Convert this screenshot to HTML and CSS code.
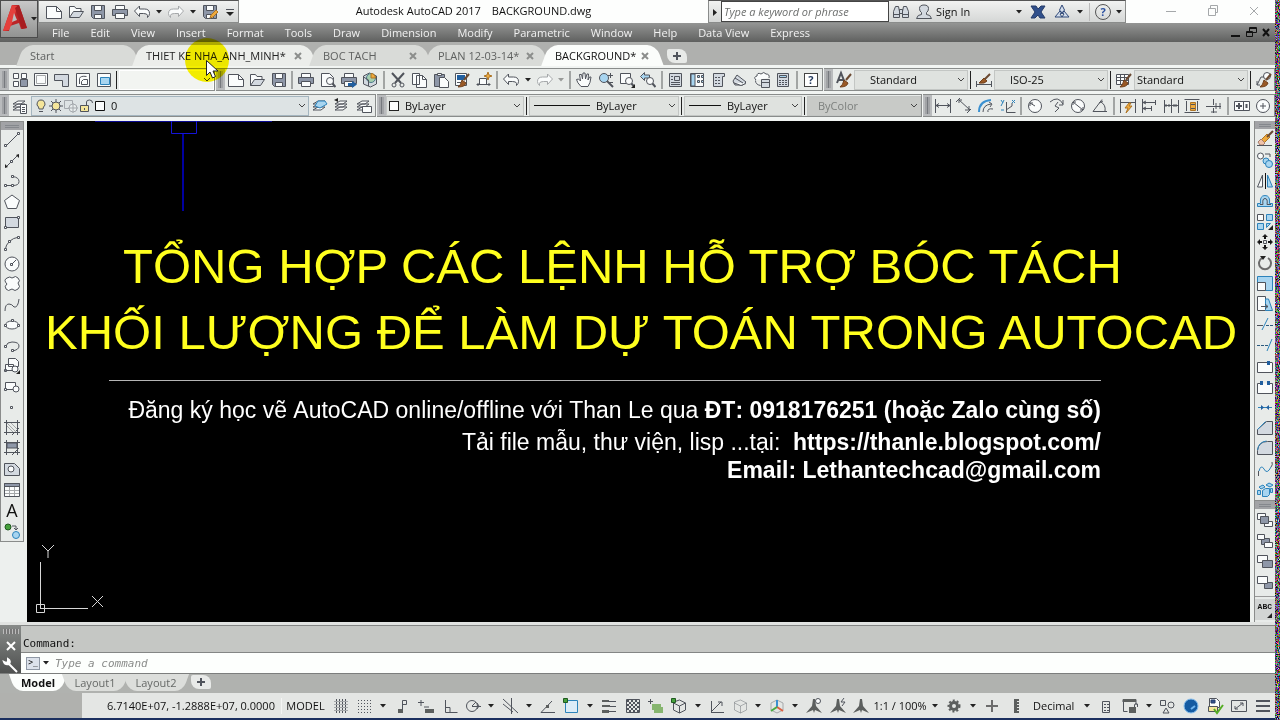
FILE: index.html
```html
<!DOCTYPE html>
<html lang="en">
<head>
<meta charset="utf-8">
<title>Autodesk AutoCAD 2017 BACKGROUND.dwg</title>
<link rel="stylesheet" href="styles.css">
</head>
<body>
<svg class="sprite" aria-hidden="true">
  <symbol id="new"><path class="w" d="M.5 2.500h10l5 5v7h-15z"/><path d="M10.500 2.500v5h5"/></symbol>
  <symbol id="open"><path class="w" d="M1.500 13.500v-11h5l1.500 2h5v3"/><path class="g" d="M1.500 13.500l4-6h10l-4 6z"/></symbol>
  <symbol id="save"><path class="s" d="M1.500 1.500h13v13h-11l-2-2z"/><path class="w" d="M4.500 1.500h7v5h-7zM4.500 10.500h7v4h-7z"/></symbol>
  <symbol id="print"><path class="w" d="M3.500 5.500v-4h9v4"/><path class="s" d="M.5 5.500h15v6h-15z"/><path class="w" d="M3.500 9.500h9v5h-9z"/></symbol>
  <symbol id="undo"><path class="w" d="M.5 7l5-5v3h5q5 0 5 4.500 0 2-2 4v-2q0-2-4-2h-4v3z"/></symbol>
  <symbol id="redo"><path class="w pale" d="M15.500 7l-5-5v3h-5q-5 0-5 4.500 0 2 2 4v-2q0-2 4-2h4v3z"/></symbol>
  <symbol id="tri"><path class="k" d="M0 0h6l-3 3.500z"/></symbol>
  <symbol id="brush"><path class="br" d="M8 8l4 3q-1 4-8 4 3-2 4-7z"/><path class="br2" d="M10 8l5-6"/></symbol>
  <symbol id="lens"><circle class="w" cx="10" cy="9" r="3.500"/><path class="th" d="M12.500 11.500l3 3.500"/></symbol>
  <symbol id="x"><path class="th" d="M1 1l6 6M7 1l-6 6"/></symbol>
  <symbol id="layers"><path class="w" d="M1 12l5-3h7l-4 3zM1 9l5-3h7l-4 3zM1 6l5-3h7l-4 3z"/></symbol>
</svg>
<div class="app">
<div class="window">
  <header class="header">
    <button class="logo" aria-label="Application menu"><svg class="logo-art" viewBox="0 0 28 30"><path class="red1" d="M1 27L10 1h7l8 23-6 1-2-6-9 3-1 5z"/><path class="red2" d="M10 1l5 1-3 13-5 11-6 1z"/><path class="red3" d="M17 1l8 23-5 1L13 4z"/><path class="hole" d="M12 9l3 7-5 2z"/></svg><svg class="dd"><use href="#tri"/></svg></button>
    <div class="titlebar">
      <div class="quick">
        <button class="ib" aria-label="New"><svg class="i"><use href="#new"/></svg></button>
        <button class="ib" aria-label="Open"><svg class="i"><use href="#open"/></svg></button>
        <button class="ib" aria-label="Save"><svg class="i"><use href="#save"/></svg></button>
        <button class="ib" aria-label="Plot"><svg class="i"><use href="#print"/></svg></button>
        <button class="ib" aria-label="Undo"><svg class="i"><use href="#undo"/></svg></button>
        <button class="db" aria-label="Undo list"><svg class="dd"><use href="#tri"/></svg></button>
        <button class="ib" aria-label="Redo"><svg class="i"><use href="#redo"/></svg></button>
        <button class="db" aria-label="Redo list"><svg class="dd"><use href="#tri"/></svg></button>
        <button class="ib" aria-label="Save as"><svg class="i"><use href="#save"/><path class="o" d="M8 14l1-3 5-5 2 2-5 5z"/></svg></button>
        <button class="ib last" aria-label="Customize"><svg class="i"><path d="M4 5.500h8"/><path class="k" d="M4 8h8l-4 4z"/></svg></button>
      </div>
      <h1 class="title"><span>Autodesk AutoCAD 2017</span><span>BACKGROUND.dwg</span></h1>
      <div class="info">
        <button class="arrow" aria-label="Collapse"><svg class="dd"><path class="k" d="M1-1l4 3.500-4 3.500z"/></svg></button>
        <input class="search" type="text" aria-label="Search" placeholder="Type a keyword or phrase">
        <button class="ib" aria-label="Find"><svg class="i"><path class="g" d="M2.500 2.500h3l1 5v6h-6v-6zM10.500 2.500h3l2 5v6h-6v-6zM6.500 5.500h3v4h-3z"/><path d="M.5 10.500h6M9.500 10.500h6"/></svg></button>
        <button class="signin"><svg class="i"><path class="g" d="M.5 14.500h15q-1-4-5-4v-2q2-1 2-4 0-3.500-4.500-3.500t-4.500 3.500q0 3 2 4v2q-4 0-5 4z"/></svg>Sign In<svg class="dd"><use href="#tri"/></svg></button>
        <button class="ib" aria-label="Exchange"><svg class="i"><path class="nv" d="M1 2h5l2 3 3-3h4l-4 6 4 6h-5l-2-3-3 3h-4l4-6z"/></svg></button>
        <button class="ib" aria-label="Autodesk 360"><svg class="i"><path class="navy" d="M5.500 6l2.500-5 2.500 5-2.500 4zM6 7l-5 6h7l2-3zM10 7l5 6h-7l-2-3z"/></svg></button>
        <button class="db" aria-label="360 menu"><svg class="dd"><use href="#tri"/></svg></button>
        <span class="rule"></span>
        <button class="ib help" aria-label="Help">?</button>
        <button class="db" aria-label="Help menu"><svg class="dd"><use href="#tri"/></svg></button>
      </div>
      <div class="winctl">
        <button aria-label="Minimize"><svg class="i"><path class="pale" d="M3 7.500h10"/></svg></button>
        <button aria-label="Restore"><svg class="i"><path class="pale" d="M3.500 4.500h7v7h-7zM5.500 4v-2.500h7v7h-2"/></svg></button>
        <button aria-label="Close"><svg class="i"><path class="pale" d="M4 3l8 8M12 3l-8 8"/></svg></button>
      </div>
    </div>
    <nav class="menu">
      <button>File</button><button>Edit</button><button>View</button><button>Insert</button><button>Format</button><button>Tools</button><button>Draw</button><button>Dimension</button><button>Modify</button><button>Parametric</button><button>Window</button><button>Help</button><button>Data View</button><button>Express</button>
      <span class="docctl"><svg class="i"><path class="bk" d="M4 11h9"/></svg><svg class="i"><path class="bk1" d="M3.500 6.500h6v5h-6zM6.500 6v-3.500h7v5h-4M3.500 7.500h6M7 3.500h6"/></svg><svg class="i"><path class="bk" d="M4 4l6 7M10 4l-6 7"/></svg></span>
    </nav>
  </header>

  <div class="tabs">
    <button class="tab t-start">Start</button>
    <button class="tab t-thiet hover">THIET KE NHA_ANH_MINH*<svg class="cx"><use href="#x"/></svg></button>
    <button class="tab t-boc">BOC TACH<svg class="cx"><use href="#x"/></svg></button>
    <button class="tab t-plan">PLAN 12-03-14*<svg class="cx"><use href="#x"/></svg></button>
    <button class="tab t-back active">BACKGROUND*<svg class="cx"><use href="#x"/></svg></button>
    <button class="plus" aria-label="New tab"><svg class="cx"><path class="th" d="M4 0v8M0 4h8"/></svg></button>
    <div class="pointer"></div>
    <svg class="cursor" viewBox="0 0 13 19"><path d="M.5.5v15l3.500-3.500 2.500 6 3-1.500-2.500-5.500h5z"/></svg>
  </div>

  <div class="bars">
    <div class="bar">
      <div class="palette p-view">
        <span class="grip"></span>
        <button class="ib" aria-label="Viewports"><svg class="i"><path class="w" d="M1.500 1.500h5v5h-5zM9.500 1.500h5v5h-5zM1.500 9.500h5v5h-5z"/><path class="s" d="M8.500 7.500h7v7h-7z"/></svg></button>
        <button class="ib" aria-label="Single viewport"><svg class="i"><path class="w" d="M1.500 1.500h13v12h-13z"/><path class="pale" d="M3.500 3.500h9v8h-9z"/></svg></button>
        <button class="ib" aria-label="Polygonal viewport"><svg class="i"><path class="g" d="M.5 2.500h14v12h-6v-6h-8z"/></svg></button>
        <button class="ib" aria-label="Object viewport"><svg class="i"><path class="w" d="M1.500 1.500h13v13h-13z"/><path d="M4.500 12v-5.500q1-3 7-2M6.500 12.500h6v-5h-4l-2 2z"/></svg></button>
        <button class="ib" aria-label="Clip viewport"><svg class="i"><path class="w" d="M1.500 1.500h13v13h-13z"/><path class="f b" d="M4.500 5.500h9v7h-9z"/></svg></button>
        <span class="sep dark"></span>
        <div class="combo blank"><select aria-label="Viewport scale"><option></option></select></div>
      </div>
      <div class="palette p-std">
        <span class="grip"></span>
        <button class="ib" aria-label="New"><svg class="i"><use href="#new"/></svg></button>
        <button class="ib" aria-label="Open"><svg class="i"><use href="#open"/></svg></button>
        <button class="ib" aria-label="Save"><svg class="i"><use href="#save"/></svg></button>
        <span class="sep"></span>
        <button class="ib" aria-label="Plot"><svg class="i"><use href="#print"/></svg></button>
        <button class="ib" aria-label="Plot preview"><svg class="i"><path class="w" d="M1.500 1.500h8l4 4v9h-12z"/><use href="#lens"/></svg></button>
        <button class="ib" aria-label="Publish"><svg class="i"><use href="#print"/><path class="bl" d="M7 11h4v-2l5 3.500-5 3.500v-2h-4z"/></svg></button>
        <button class="ib" aria-label="3D DWF"><svg class="i"><path class="g" d="M1.500 4l6-3 7 3v8l-6 3-7-3z"/><circle class="glb" cx="9" cy="6" r="4.500"/><path class="o" d="M9 6v-4.500q4 0 4.500 4.500z"/><path d="M1.500 5l5 3v6"/></svg></button>
        <span class="sep"></span>
        <button class="ib" aria-label="Cut"><svg class="i"><path class="th" d="M2 1l9 10M14 1l-9 10"/><circle cx="4" cy="13" r="2"/><circle cx="12" cy="13" r="2"/></svg></button>
        <button class="ib" aria-label="Copy"><svg class="i"><path class="w" d="M1.500 1.500h7v11h-7zM5.500 3.500h6l4 4v8h-10z"/><path d="M11.500 3.500v4h4"/></svg></button>
        <button class="ib" aria-label="Paste"><svg class="i"><path class="s" d="M1.500 2.500h10v12h-10z"/><path class="w" d="M4.500 1.500h4v2h-4zM6.500 5.500h5l4 4v6h-9z"/></svg></button>
        <button class="ib" aria-label="Match properties"><svg class="i"><path class="w" d="M1.500 1.500h11v12h-11z"/><path class="bl" d="M3 3h8v5H3z"/><path d="M3 10.500h4"/><use href="#brush"/></svg></button>
        <button class="ib" aria-label="Block editor"><svg class="i"><path class="w" d="M3.500 6.500h7v6h-7z"/><path d="M.5 12.500h14M2 11v3M13 11v3"/><path class="o" d="M12 0l1 3 3 1-3 1-1 3-1-3-3-1 3-1z"/></svg></button>
        <span class="sep"></span>
        <button class="ib" aria-label="Undo"><svg class="i"><use href="#undo"/></svg></button>
        <button class="db" aria-label="Undo list"><svg class="dd"><use href="#tri"/></svg></button>
        <button class="ib" aria-label="Redo"><svg class="i"><use href="#redo"/></svg></button>
        <button class="db" aria-label="Redo list"><svg class="dd faded"><use href="#tri"/></svg></button>
        <span class="sep"></span>
        <button class="ib" aria-label="Pan"><svg class="i"><path class="w" d="M5 14.500q-4-4-4.500-7l2-.5 2 2-1-6.500h2l1 4.500.5-6h2l.5 6 1.500-5h1.500l-.5 6 1.500-3h1.500q-.5 6-3 9.500z"/></svg></button>
        <button class="ib" aria-label="Zoom realtime"><svg class="i"><circle class="f" cx="6" cy="6" r="4.500"/><path class="th" d="M9 9l6 6"/><path d="M10 10.500h5M12.500 1v5M10 3.500h5"/></svg></button>
        <button class="ib" aria-label="Zoom window"><svg class="i"><path class="w" d="M1.500 1.500h10v10h-10z"/><use href="#lens"/><path class="k" d="M16 12v4h-4z"/></svg></button>
        <button class="ib" aria-label="Zoom previous"><svg class="i"><path class="f" d="M.5 4.500l4-4v2.500h5v3h-5v2.500z"/><use href="#lens"/></svg></button>
        <span class="sep"></span>
        <button class="ib" aria-label="Properties"><svg class="i"><path class="g" d="M1.500 1.500h12v13h-12zM6.500 4.500h5v4h-5z"/><path d="M3 4.500h2M3 7.500h2M3 10.500h9M3 12.500h9"/></svg></button>
        <button class="ib" aria-label="DesignCenter"><svg class="i"><path class="w" d="M1.500 1.500h13v13h-13z"/><path class="f" d="M2 2h4v12h-4zM8.500 3.500h2v2h-2zM12.500 3.500h2v2h-2zM8.500 8.500h2v2h-2zM12.500 8.500h2v2h-2z"/></svg></button>
        <button class="ib" aria-label="Tool palettes"><svg class="i"><path class="g" d="M2.500 1.500h11v3h-2v10h-9z"/><path class="dash" d="M4 5.500h6M4 8.500h6M4 11.500h6"/></svg></button>
        <button class="ib" aria-label="Sheet set"><svg class="i"><path class="g" d="M1 9l4-6 9 7-3 3h-8z"/><path class="w" d="M1 10.500l8 3 5-2M3 6l8 5"/></svg></button>
        <button class="ib" aria-label="Markup"><svg class="i"><path class="w" d="M2 8q-3-3 1-4 0-4 4-2 3-3 5 0 4 0 3 4M1.500 8.500q0 4 5 5"/><path class="g" d="M7.500 7.500h8v8h-8z"/><path d="M8 10.500h7"/></svg></button>
        <button class="ib" aria-label="Calculator"><svg class="i"><path class="g" d="M2.500 1.500h11v13h-11z"/><path class="f" d="M4.500 3.500h7v2h-7z"/><path class="dash" d="M4 8.500h8M4 10.500h8M4 12.500h8"/></svg></button>
        <span class="sep"></span>
        <button class="ib helpbox" aria-label="Help">?</button>
      </div>
      <div class="palette p-style">
        <span class="grip"></span>
        <button class="ib" aria-label="Text style"><svg class="i"><path class="th" d="M1 11l4-10 4 10M2.500 8h5"/><use href="#brush"/></svg></button>
        <div class="combo"><select class="inset" aria-label="Text style"><option>Standard</option></select></div>
        <span class="sep dark"></span>
        <button class="ib" aria-label="Dimension style"><svg class="i"><path d="M.5 9v6M15.500 9v6M1 12.500h14"/><path class="br" d="M8 6l3 3q-2 3-8 2z"/><path class="br2" d="M9 7l5-5"/></svg></button>
        <div class="combo"><select class="inset" aria-label="Dimension style"><option>ISO-25</option></select></div>
        <span class="sep dark"></span>
        <button class="ib" aria-label="Table style"><svg class="i"><path class="w" d="M.5 2.500h12v10h-12z"/><path d="M.5 5.500h12M.5 8.500h12M4.500 2.500v10M8.500 2.500v10"/><use href="#brush"/></svg></button>
        <div class="combo"><select class="near" aria-label="Table style"><option>Standard</option></select></div>
        <span class="sep dark"></span>
        <button class="ib" aria-label="Multileader style"><svg class="i"><circle class="w" cx="11" cy="4" r="3.500"/><path d="M1 13l4-8h3M1 9v4h3"/><use href="#brush"/></svg></button>
      </div>
    </div>
    <div class="bar">
      <div class="palette p-layer">
        <span class="grip"></span>
        <button class="ib" aria-label="Layer properties"><svg class="i"><use href="#layers"/><path class="w" d="M8.500 6.500h6v9h-6z"/><path d="M10 9.500h3M10 11.500h3M10 13.500h3"/></svg></button>
        <div class="combo layer">
          <svg class="m"><path class="y" d="M5 10q0-2-2-4 0-5 4-5t4 5q-2 2-2 4z"/><path d="M5 12.500h4"/></svg>
          <svg class="m"><path d="M7 0v14M0 7h14M2 2l10 10M12 2l-10 10"/><circle class="y" cx="7" cy="7" r="4"/></svg>
          <svg class="m faded"><path d="M.5 1.500h8v8h-8z"/><circle class="w" cx="9" cy="9" r="4"/><path d="M9 4v10M4 9h10"/></svg>
          <svg class="m"><path class="y" d="M1.500 6.500h8v6h-8z"/><path d="M7.500 6v-3q0-2 3-2t3 3M5.500 9v2"/></svg>
          <svg class="m"><path class="w bk1" d="M1.500 2.500h9v9h-9z"/></svg>
          <select aria-label="Layer"><option>0</option></select>
        </div>
        <button class="ib" aria-label="Make current"><svg class="i"><use href="#layers"/><path class="f b" d="M6 3h7l2 3-7 4-5-2z"/></svg></button>
        <button class="ib" aria-label="Layer previous"><svg class="i"><use href="#layers"/><path class="k" d="M0 2l4-2v4z"/></svg></button>
        <button class="ib" aria-label="Layer states"><svg class="i"><use href="#layers"/><path class="w" d="M6.500 8.500h9v6h-9z"/></svg></button>
      </div>
      <div class="palette p-prop">
        <span class="grip"></span>
        <div class="combo c-color"><span class="swatch"></span><select aria-label="Color"><option>ByLayer</option></select></div>
        <span class="sep dark"></span>
        <div class="combo c-ltype"><span class="sample"></span><select aria-label="Linetype"><option>ByLayer</option></select></div>
        <span class="sep dark"></span>
        <div class="combo c-weight"><span class="sample"></span><select aria-label="Lineweight"><option>ByLayer</option></select></div>
        <span class="sep dark"></span>
        <div class="combo off"><select aria-label="Plot style" disabled><option>ByColor</option></select></div>
      </div>
      <div class="palette p-dim">
        <span class="grip"></span>
        <button class="ib" aria-label="Linear"><svg class="i"><path d="M.5 1v14M15.500 1v14M1 7.500h14M4 5.500l-3 2 3 2M12 5.500l3 2-3 2"/></svg></button>
        <button class="ib" aria-label="Aligned"><svg class="i"><path d="M2 1l12 11M0 4l4-4M11 15l4-4M3 5v-3h3M13 8v4h-4"/></svg></button>
        <button class="ib" aria-label="Arc length"><svg class="i"><path class="b2" d="M1 14q0-11 12-12"/><path d="M5 14q0-7 8-8M11 4l3 2-2 3M10 14q-1-4 5-3"/></svg></button>
        <button class="ib" aria-label="Ordinate"><svg class="i"><path class="b" d="M1 2l2 3M4 2l-3 6M1 12h3M12 2l3 3M15 2l-3 3"/><path d="M6.500 4v10.500h9M6 12l6-4v-3"/></svg></button>
        <span class="sep"></span>
        <button class="ib" aria-label="Radius"><svg class="i"><circle class="w" cx="8" cy="8" r="6.500"/><path d="M8 8l-5-3M3 8v-3h3"/></svg></button>
        <button class="ib" aria-label="Jogged"><svg class="i"><path d="M1 4q8-7 13 2M14 2v5h-4M6 14l4-4-4-2 3-4"/></svg></button>
        <button class="ib" aria-label="Diameter"><svg class="i"><circle class="w" cx="8" cy="8" r="6.500"/><path d="M3 4l10 8M3 7v-3h3M13 9v3h-3"/></svg></button>
        <button class="ib" aria-label="Angular"><svg class="i"><path d="M15 13.500h-14l9-12M9 4q5 3 4 9M7 5l4-2"/></svg></button>
        <span class="sep"></span>
        <button class="ib" aria-label="Quick dimension"><svg class="i"><path d="M.5 1v14M15.500 1v14M1 4.500h14"/><path class="o" d="M9 5l-4 5h3l-2 5 6-7h-3l2-3z"/></svg></button>
        <button class="ib" aria-label="Baseline"><svg class="i"><path d="M1.500 1v14M2 4.500h13M2 10.500h9M14.500 2v5M10.500 8v5M5 3l-3 1.500 3 1.500M5 9l-3 1.500 3 1.500"/></svg></button>
        <button class="ib" aria-label="Continue"><svg class="i"><path d="M1.500 2v13M8.500 1v14M15.500 2v13M1 7.500h15M3 6v3M6 6v3M11 6v3M13 6v3"/></svg></button>
        <button class="ib" aria-label="Dimension space"><svg class="i"><path d="M.5 1.500h15M.5 14.500h15M2.500 3v10M13.500 3v10"/><path class="o" d="M6.500 4.500h5v8h-5z"/><path d="M7 6.500h4M7 10.500h4"/></svg></button>
        <button class="ib" aria-label="Dimension break"><svg class="i"><path d="M0 8.500h15M7.500 1v6M7.500 10v5M5 14h6M10 5v6M14 5v6"/></svg></button>
        <span class="sep"></span>
        <button class="ib" aria-label="Tolerance"><svg class="i"><path class="w" d="M.5 3.500h15v9h-15zM9.500 3.500v9"/><path class="th" d="M5 5v6M2 8h6M12.500 6v4"/></svg></button>
        <button class="ib" aria-label="Center mark"><svg class="i"><circle class="w" cx="8" cy="8" r="6.500"/><path d="M8 5v6M5 8h6"/></svg></button>
      </div>
    </div>
  </div>

  <main class="work">
    <div class="side left">
      <span class="grip flat"></span>
      <button class="vb" aria-label="Line"><svg class="i"><path d="M2 14L14 2"/><path class="w" d="M.5 12.500h2v2h-2zM13.500.5h2v2h-2z"/></svg></button>
      <button class="vb" aria-label="Construction line"><svg class="i"><path d="M2 14L14 2"/><path class="k" d="M1 15v-4l3 3zM15 1v4l-3-3z"/><path class="w" d="M6.500 7.500h2v2h-2z"/></svg></button>
      <button class="vb" aria-label="Polyline"><svg class="i"><path d="M1 12.500h8q6 0 6-4t-6-5"/><path class="w" d="M.5 11.500h2v2h-2zM7.500 11.500h2v2h-2zM7.500 2.500h2v2h-2z"/></svg></button>
      <button class="vb" aria-label="Polygon"><svg class="i"><path class="w" d="M8 1l7.500 5.500-3 8h-9l-3-8z"/></svg></button>
      <button class="vb" aria-label="Rectangle"><svg class="i"><path class="g" d="M1.500 3.500h13v10h-13z"/><path class="w" d="M.5 12.500h2v2h-2zM13.500 2.500h2v2h-2z"/></svg></button>
      <button class="vb" aria-label="Arc"><svg class="i"><path d="M1 15q2-11 14-13"/><path class="w" d="M.5 13.500h2v2h-2zM13.500 1.500h2v2h-2zM4.500 5.500h2v2h-2z"/></svg></button>
      <button class="vb" aria-label="Circle"><svg class="i"><circle class="w" cx="8" cy="8" r="7"/><path d="M8 8l4-4M6.500 7.500h2v2h-2z"/></svg></button>
      <button class="vb" aria-label="Revision cloud"><svg class="i"><path class="w" d="M3 8q-4-4 0-6 3-2 5 0 4-3 6 0 3 3 0 5 3 4 0 6-3 3-6 0-4 3-6 0-2-3 1-5z"/></svg></button>
      <button class="vb" aria-label="Spline"><svg class="i"><path d="M1 14q0-7 4-7 3 0 5 3 4 1 5-8"/></svg></button>
      <button class="vb" aria-label="Ellipse"><svg class="i"><ellipse class="w" cx="8" cy="8" rx="6.500" ry="4"/><path class="w" d="M.5 7.500h2v2h-2zM13.500 7.500h2v2h-2zM7.500 2.500h2v2h-2z"/></svg></button>
      <button class="vb" aria-label="Ellipse arc"><svg class="i"><path d="M2 8q1-4 6-4 7 0 7 4t-7 5"/><path class="w" d="M.5 7.500h2v2h-2zM7.500 11.500h2v2h-2z"/></svg></button>
      <button class="vb" aria-label="Insert block"><svg class="i"><path class="w" d="M4.500.5h7l3 3v5h-10zM1.500 6.500h8v6h-8z"/><circle class="w" cx="11" cy="11" r="3"/><path class="k" d="M16 12v4h-4z"/><path d="M.5 11.500h2v2h-2z"/></svg></button>
      <button class="vb" aria-label="Make block"><svg class="i"><path class="w" d="M1.500 3.500h10v7h-10z"/><circle class="w" cx="12" cy="10" r="3"/><path class="w" d="M.5 9.500h2v2h-2z"/></svg></button>
      <button class="vb" aria-label="Point"><svg class="i"><path class="w" d="M6.500 7.500h2v2h-2z"/></svg></button>
      <button class="vb" aria-label="Hatch"><svg class="i"><path d="M2.500 0v15M13.500 0v15M0 2.500h16M0 12.500h16M8 15l7-7"/><path class="pale" d="M3 6l6 6M3 3l9 9M7 3l6 6"/></svg></button>
      <button class="vb" aria-label="Gradient"><svg class="i"><path class="s" d="M3 3h10v5h-10z"/><path d="M2.500 0v15M13.500 0v15M0 2.500h16M0 12.500h16M8 15l7-7"/></svg></button>
      <button class="vb" aria-label="Region"><svg class="i"><path class="g" d="M.5 2.500h10l5 5v7h-15z"/><circle class="w" cx="7" cy="8" r="3"/></svg></button>
      <button class="vb" aria-label="Table"><svg class="i"><path class="w" d="M.5 1.500h15v13h-15z"/><path class="s" d="M.5 1.500h15v3h-15z"/><path class="pale" d="M1 8.500h14M1 11.500h14M5.500 5v9M10.500 5v9"/></svg></button>
      <button class="vb letter" aria-label="Multiline text">A</button>
      <button class="vb" aria-label="Add selected"><svg class="i"><circle class="gn" cx="4" cy="4" r="3"/><circle class="f b" cx="12" cy="12" r="3.500"/><path d="M8 3h4v4M10 5l2 2 2-2"/></svg></button>
    </div>

    <section class="canvas" aria-label="Drawing area">
      <svg class="beam" viewBox="0 0 180 92"><path class="faint" d="M0 .5h177"/><path d="M76.500 0v12.500h25v-12.500"/><path class="stem" d="M88 13v77"/></svg>
      <h2 class="head"><span>TỔNG HỢP CÁC LỆNH HỖ TRỢ BÓC TÁCH</span><span>KHỐI LƯỢNG ĐỂ LÀM DỰ TOÁN TRONG AUTOCAD</span></h2>
      <div class="contact">
        <p>Đăng ký học vẽ AutoCAD online/offline với Than Le qua <b>ĐT: 0918176251 (hoặc Zalo cùng số)</b></p>
        <p>Tải file mẫu, thư viện, lisp ...tại:&nbsp; <b>https://thanle.blogspot.com/</b></p>
        <p><b>Email: Lethantechcad@gmail.com</b></p>
      </div>
      <svg class="ucs" viewBox="0 0 70 72"><path d="M.5 61.500h8v8h-8zM4.500 66V19M4 65.500h48M6 2l6 6 6-6M12 8v7M56 53l11 11M67 53L56 64"/></svg>
    </section>

    <div class="side right">
      <div class="stack modify">
        <span class="grip flat"></span>
        <button class="vb" aria-label="Erase"><svg class="i"><path class="o" d="M4 9l6-6 3 3-6 6z"/><path class="br2" d="M10 6l6-6"/><path class="pk" d="M1 11l3-3 4 4-2 2H3z"/><path d="M0 14.500h15"/></svg></button>
        <button class="vb" aria-label="Copy"><svg class="i"><circle class="w" cx="3.500" cy="4" r="3"/><path d="M8 2h5v3"/><circle class="f b" cx="9" cy="9" r="3"/><circle class="f b" cx="12" cy="12" r="3.500"/></svg></button>
        <button class="vb" aria-label="Mirror"><svg class="i"><path class="w" d="M5.500 2v12h-5z"/><path class="f b" d="M10.500 2v12h5z"/><path class="bk1" d="M8.500 0v16"/></svg></button>
        <button class="vb" aria-label="Offset"><svg class="i"><path class="f b" d="M.5 13.500v-3h3q-1-8 4.500-8t4.500 8h3v3z"/><path d="M3 11.500h3q-1-6 2-6t2 6h4"/></svg></button>
        <button class="vb" aria-label="Array"><svg class="i"><path class="w" d="M.5.5h6v6h-6z"/><path class="f b" d="M9.500.5h6v6h-6zM.5 9.500h6v6h-6zM9.500 9.500h4l-4 4z"/><path class="k" d="M16 11v5h-5z"/></svg></button>
        <button class="vb" aria-label="Move"><svg class="i"><path class="k" d="M8 0l3 3H5zM8 16l3-3H5zM0 8l3-3v6zM16 8l-3-3v6z"/><path class="bk" d="M8 2v3M8 11v3M2 8h3M11 8h3"/><path d="M6.500 6.500h3v3h-3z"/></svg></button>
        <button class="vb" aria-label="Rotate"><svg class="i"><path class="gr" d="M5 3a6 6 0 1 0 6 0"/><path class="k" d="M3 1h6l-3 4z"/></svg></button>
        <button class="vb" aria-label="Scale"><svg class="i"><path class="f b" d="M.5.5h15v14h-15z"/><path class="w" d="M.5 6.500h8v8h-8z"/></svg></button>
        <button class="vb" aria-label="Stretch"><svg class="i"><path class="w" d="M.5.5h8v14h-8z"/><path class="f b" d="M8.500 3h3l4 11.500h-7z"/><path d="M4 10.500h7M8 8l3 2.500-3 2.500"/></svg></button>
        <button class="vb" aria-label="Trim"><svg class="i"><path class="b" d="M5 13L11 1"/><path class="dash2" d="M9 8.500h7"/><path d="M0 8.500h6"/></svg></button>
        <button class="vb" aria-label="Extend"><svg class="i"><path class="b" d="M10 14L15 2"/><path class="dash2" d="M0 8.500h11"/></svg></button>
        <button class="vb" aria-label="Break at point"><svg class="i"><path class="w" d="M15 4.500H.5v10h15v-10"/><path class="bl" d="M10 3h3v4h-3z"/></svg></button>
        <button class="vb" aria-label="Break"><svg class="i"><path class="w" d="M4 4.500H.5v10h15v-10H12"/><path class="bl" d="M3 2h3v4H3zM10 2h3v4h-3z"/></svg></button>
        <button class="vb" aria-label="Join"><svg class="i"><path class="b" d="M1 8.500h14"/><path class="bl" d="M4 6l3 2.500-3 2.500zM12 6L9 8.500l3 2.500z"/></svg></button>
        <button class="vb" aria-label="Chamfer"><svg class="i"><path class="g" d="M.5 14.500v-5l9-8h6v13z"/><path class="b" d="M.5 9.500l8-8"/></svg></button>
        <button class="vb" aria-label="Fillet"><svg class="i"><path class="g" d="M.5 14.500v-4q1-9 10-9h5v13z"/><path class="b" d="M.5 10q1-8 9-9"/></svg></button>
        <button class="vb" aria-label="Blend"><svg class="i"><path class="b" d="M2 10q2-7 5-2 3 6 7-2"/><path d="M1.500 15v-5M14 6q2-2 1-5"/></svg></button>
        <button class="vb" aria-label="Explode"><svg class="i"><path class="f b" d="M2 5l4-2 2 2-4 2zM9 3l3-2 4 2-3 2zM.5 8.500h3v4h-3zM5.500 8.500l3-2h4v6l-2 2h-5zM13.500 6.500h2v4h-2z"/></svg></button>
      </div>
      <div class="stack order">
        <span class="grip flat"></span>
        <button class="vb" aria-label="Bring to front"><svg class="i"><path class="w" d="M.5 1.500h8v6h-8zM7.500 9.500h8v5h-8z"/><path class="s" d="M3.500 4.500h8v7h-8z"/></svg></button>
        <button class="vb" aria-label="Send to back"><svg class="i"><path class="s" d="M4.500 5.500h8v6h-8z"/><path class="w" d="M.5 1.500h7v5h-7zM7.500 9.500h8v5h-8z"/></svg></button>
        <button class="vb" aria-label="Bring above"><svg class="i"><path class="w" d="M.5 1.500h10v7h-10z"/><path class="s" d="M5.500 6.500h10v7h-10z"/></svg></button>
        <button class="vb" aria-label="Send under"><svg class="i"><path class="s" d="M7.500 7.500h8v6h-8z"/><path class="w" d="M.5 1.500h10v7h-10z"/></svg></button>
        <span class="hr"></span>
        <button class="vb abc" aria-label="Text to front">ABC<svg class="dd"><path class="k" d="M6-1v5h-5z"/></svg></button>
      </div>
    </div>
  </main>

  <section class="command">
    <div class="cmdgrip"><span class="dots"></span><svg class="i"><path class="wt" d="M4 4l8 8M12 4l-8 8"/></svg><svg class="i"><path class="wt" d="M5 6l9 9M1 5q1 3 5 2 2-3-1-5l0 3-2 1z"/></svg></div>
    <div class="cmdmain">
      <p class="history">Command:</p>
      <div class="entry"><button class="prompt" aria-label="Recent commands">&gt;_</button><svg class="dd"><use href="#tri"/></svg><input type="text" aria-label="Command" placeholder="Type a command"></div>
    </div>
  </section>

  <div class="layouts">
    <button class="ltab active">Model</button><button class="ltab">Layout1</button><button class="ltab">Layout2</button>
    <button class="plus low" aria-label="New layout"><svg class="cx"><path class="th" d="M4 0v8M0 4h8"/></svg></button>
  </div>

  <footer class="status">
    <span class="coords">6.7140E+07, -1.2888E+07, 0.0000</span>
    <button class="model">MODEL</button>
    <button class="sb" aria-label="Grid"><svg class="i"><path d="M3.500 1v14M6.500 1v14M9.500 1v14M12.500 1v14"/><path class="pale" d="M1 3.500h14M1 6.500h14M1 9.500h14M1 12.500h14"/></svg></button>
    <button class="sb narrow" aria-label="Snap"><svg class="i"><path class="dots1" d="M2 2.500h13M2 5.500h13M2 8.500h13M2 11.500h13M2 14.500h13"/></svg></button>
    <button class="sd" aria-label="Snap options"><svg class="dd"><use href="#tri"/></svg></button>
    <button class="sb" aria-label="Infer constraints"><svg class="i"><path class="gf" d="M4 11h5v4H4z"/><path d="M8.500 12V2.500h4v4h-4"/></svg></button>
    <button class="sb" aria-label="Dynamic input"><svg class="i"><path d="M0 4.500h6M3 2v6M6 9h5"/><path class="gf" d="M7 11h9v4H7z"/></svg></button>
    <button class="sb" aria-label="Ortho"><svg class="i"><path d="M3.500 2v12.500h12M4 9.500h4v5"/></svg></button>
    <button class="sb narrow" aria-label="Polar"><svg class="i"><circle cx="7" cy="8" r="5.500"/><path d="M7 8.500h9M7 8l4-4M12 5l2 3-2 3"/></svg></button>
    <button class="sd" aria-label="Polar options"><svg class="dd"><use href="#tri"/></svg></button>
    <button class="sb" aria-label="Isodraft"><svg class="i"><path d="M1 1l15 14M9.500 0v16M1 6l10 8"/></svg></button>
    <button class="sd" aria-label="Isodraft options"><svg class="dd"><use href="#tri"/></svg></button>
    <button class="sb narrow" aria-label="Object snap tracking"><svg class="i"><path d="M1 14.500L12 3M1 14.500h14"/><path class="gf" d="M6 7h3v3H6z"/></svg></button>
    <button class="sb" aria-label="Object snap"><svg class="i"><path class="f2 b" d="M2.500 2.500h12v12h-12z"/><path class="gn" d="M.5.5h4v4h-4z"/></svg></button>
    <button class="sd" aria-label="Object snap options"><svg class="dd"><use href="#tri"/></svg></button>
    <button class="sb" aria-label="Lineweight"><svg class="i"><path class="gf" d="M1 2h7v2H1zM1 7h8v2H1zM1 12h7v3H1z"/><path d="M7 3.500h8M9 8.500h6M7 13.500h8"/></svg></button>
    <button class="sb" aria-label="Transparency"><svg class="i"><path class="hatch" d="M2 3h12M2 7h12M2 11h12"/><path class="hatch alt" d="M2 5h12M2 9h12M2 13h12"/><path d="M1.500 1.500h13v13h-13z"/></svg></button>
    <button class="sb narrow" aria-label="Selection cycling"><svg class="i"><path class="lg" d="M4 6h9v3h2v6H6v-3H4z"/><path d="M0 3.500h5M2.500 1v5"/></svg></button>
    <button class="sb narrow" aria-label="3D object snap"><svg class="i"><path d="M2.500 4l6-2 6 3v7l-6 3-6-3zM2.500 5l6 3 6-3M8.500 8v7"/><path class="gn" d="M.5.500h4v4h-4z"/></svg></button>
    <button class="sd" aria-label="3D snap options"><svg class="dd"><use href="#tri"/></svg></button>
    <button class="sb" aria-label="Dynamic UCS"><svg class="i"><path d="M2.500 3v12M2 14.500h13M2 14L12 4M9 4h4v4"/></svg></button>
    <button class="sb narrow" aria-label="Selection filter"><svg class="i faded"><path d="M2.500 4l6-2 6 3v7l-6 3-6-3zM2.500 5l6 3 6-3M8.500 8v7"/></svg></button>
    <button class="sd" aria-label="Filter options"><svg class="dd"><use href="#tri"/></svg></button>
    <button class="sb narrow" aria-label="Gizmo"><svg class="i"><path class="pale" d="M8 2l6 3v7l-6 3-6-3V5z"/><path class="b2" d="M8 9V2"/><path class="rs" d="M8 9l6 4"/><path class="gs" d="M8 9l-6 4"/></svg></button>
    <button class="sd" aria-label="Gizmo options"><svg class="dd"><use href="#tri"/></svg></button>
    <button class="sb" aria-label="Annotation visibility"><svg class="i"><path class="gf" d="M7 1h2l1 7 6 7-7-3-1 3-1-3-7 3 6-7z"/><circle class="w" cx="12" cy="3" r="2.500"/></svg></button>
    <button class="sb narrow" aria-label="Auto scale"><svg class="i"><path class="gf" d="M7 1h2l1 7 6 7-7-3-1 3-1-3-7 3 6-7z"/><path d="M14 0l-3 4h4l-3 4"/></svg></button>
    <button class="sb narrow" aria-label="Annotation"><svg class="i"><path class="gf" d="M7 1h2l1 7 6 7-7-3-1 3-1-3-7 3 6-7z"/></svg></button>
    <button class="scale">1:1 / 100%</button>
    <button class="sd" aria-label="Scale list"><svg class="dd"><use href="#tri"/></svg></button>
    <button class="sb" aria-label="Workspace"><svg class="i"><circle class="gear" cx="8" cy="8" r="3.500"/><circle class="teeth" cx="8" cy="8" r="5.500"/></svg></button>
    <button class="sd" aria-label="Workspace list"><svg class="dd"><use href="#tri"/></svg></button>
    <button class="sb" aria-label="Annotation monitor"><svg class="i"><path class="gr" d="M2 8h12M8 2v12"/></svg></button>
    <button class="sb" aria-label="Units"><svg class="i"><path class="gf" d="M6 1h5v2H9v1h2v2H9v1h2v2H9v1h2v2H9v1h2v2H6z"/></svg></button>
    <button class="units">Decimal</button>
    <button class="sd" aria-label="Units list"><svg class="dd"><use href="#tri"/></svg></button>
    <button class="sb" aria-label="Quick properties"><svg class="i"><path d="M4.500 3.500h7v11h-7z"/><path class="dash" d="M6 6.500h5M6 9.500h5M6 12.500h5"/></svg></button>
    <button class="sb" aria-label="Lock UI"><svg class="i"><path d="M1 4V1.500h13V7M1.500 3v10.500h4"/><path class="gf" d="M7 9h7v6H7zM1 1h13v3H1z"/><path d="M12.500 9V7q0-2 3-1v3"/></svg></button>
    <button class="sd" aria-label="Lock options"><svg class="dd"><use href="#tri"/></svg></button>
    <button class="sb" aria-label="Isolate"><svg class="i"><path d="M1.500 2.500h5v5h-5zM4 15l3-5 3 5z"/><circle cx="12" cy="7" r="3"/></svg></button>
    <button class="sb" aria-label="Graphics performance"><svg class="i"><circle class="ball" cx="8" cy="8" r="7"/><path class="b3" d="M8 11l4-3"/></svg></button>
    <button class="sb" aria-label="File trust"><svg class="i"><path class="w" d="M2.500.5h7l3 3v6h-10z"/><path class="nv" d="M4 2h4v3H4z"/><path class="y" d="M1.500 8.500h9v5h-9z"/><path class="chk" d="M7 11l3 4 6-8"/></svg></button>
    <button class="sb" aria-label="Clean screen"><svg class="i"><path d="M.5 2.500h15v11h-15zM4 11l8-6M4 8v3h3M12 8V5H9"/></svg></button>
    <button class="sb" aria-label="Customization"><svg class="i"><path class="th" d="M1 3h14M1 8h14M1 13h14"/></svg></button>
  </footer>
  <div class="taskline"></div>
</div>
<svg class="edge" aria-hidden="true"><filter id="grain" x="0" y="0" width="100%" height="100%" color-interpolation-filters="sRGB"><feTurbulence type="fractalNoise" baseFrequency="0.9" numOctaves="2" seed="4"/><feColorMatrix values="2.500 0 0 0 -.85  0 2.500 0 0 -.9  0 0 2.500 0 -.85  0 0 0 0 1"/></filter><rect width="100%" height="100%" filter="url(#grain)"/></svg>
</div>
</body>
</html>
```
FILE: styles.css
```css
* { box-sizing: border-box; }
html, body { height: 100%; }
body { margin: 0; overflow: hidden; font: 11px/16px "Open Sans", "Noto Sans", sans-serif; color: #111; background: #b0b1ae; }
button, input, select { font: inherit; color: inherit; margin: 0; padding: 0; border: 0; background: none; border-radius: 0; }
h1, h2, p { margin: 0; font-weight: normal; }
.sprite { position: absolute; width: 0; height: 0; }
.app { display: flex; height: 100%; }
.window { flex: 1; min-width: 0; display: flex; flex-direction: column; }
.edge { width: 5px; height: 100%; flex: none; }

/* icon drawing */
.i { width: 16px; height: 16px; flex: none; display: block; overflow: visible; }
.m { width: 14px; height: 14px; flex: none; overflow: visible; }
.dd { width: 6px; height: 4px; flex: none; display: block; overflow: visible; }
.cx { width: 8px; height: 8px; flex: none; overflow: visible; }
.i, .m, .dd, .cx { fill: none; stroke: #50545c; }
.w { fill: #fafcfc; }
.g { fill: #d3d9e0; }
.s { fill: #8e97a8; }
.f { fill: #a8d5f0; }
.f2 { fill: #dcecf8; }
.y { fill: #f4e59a; }
.o { fill: #eeaa3d; stroke: #ae7425; }
.glb { fill: #a6cfae; stroke: #4d7a8c; }
.pk { fill: #efc2aa; stroke: #a77d6c; }
.k { fill: #222; stroke: none; }
.bk { stroke: #111; stroke-width: 2; }
.bk1 { stroke: #111; }
.bl { fill: #215f9f; stroke: none; }
.nv { fill: #30508c; stroke: #263c69; }
.navy { fill: #d5dfed; stroke: #2f4878; }
.b { stroke: #2c83bb; }
.b2 { stroke: #3b91d1; stroke-width: 2; }
.b3 { stroke: #70b5f0; stroke-width: 2; }
.th { stroke-width: 2; }
.gr { stroke: #6c6c6c; stroke-width: 2; }
.gf { fill: #5c5f5e; stroke: none; }
.gn { fill: #46a13c; stroke: #205a20; }
.lg { fill: #86b56f; stroke: none; }
.br { fill: #9a5925; stroke: #70401c; }
.br2 { stroke: #6b4a32; stroke-width: 2; }
.rs { stroke: #dc6042; stroke-width: 2; }
.gs { stroke: #4ba943; stroke-width: 2; }
.chk { stroke: #55ad24; stroke-width: 2; }
.wt { stroke: #fff; stroke-width: 2; }
.dash { stroke-dasharray: 2 1; }
.dash2 { stroke: #2c5b80; stroke-dasharray: 3 1; }
.dots1 { stroke-dasharray: 1 2; }
.hatch { stroke-dasharray: 2 2; stroke-width: 2; }
.alt { stroke-dashoffset: 2; }
.gear { stroke: #5c5f5e; stroke-width: 3; }
.teeth { stroke: #5c5f5e; stroke-width: 2; stroke-dasharray: 2 2; }
.ball { fill: #155ba2; stroke: #86bdec; }
.pale { stroke: #a5a8aa; }
.faded { opacity: .4; }
.red1 { fill: #bb2527; stroke: none; }
.red2 { fill: #e4403c; stroke: none; }
.red3 { fill: #a81d20; stroke: none; }
.hole { fill: #bdbdbd; stroke: none; }

/* title and menu */
.header { flex: none; display: grid; grid-template: 23px 19px / 38px 1fr; }
.logo { grid-area: 1 / 1 / 3 / 2; z-index: 1; height: 38px; display: flex; align-items: center; justify-content: center; gap: 1px; background: linear-gradient(#c8c8c8, #929392); border: 1px solid #4c4c4c; }
.logo-art { width: 28px; height: 30px; flex: none; }
.titlebar { grid-area: 1 / 2; display: flex; background: #fdfefd; }
.quick, .info { display: flex; align-items: center; background: linear-gradient(#f1f2f1, #d5d7d6); border: 1px solid #8a8c8b; border-top-color: #555; }
.quick { flex: 0 0 201px; padding-left: 4px; }
.ib { flex: 1 1 0; height: 20px; display: flex; align-items: center; justify-content: center; }
.quick .ib { flex: 0 0 22px; }
.quick .last { flex: 1; }
.db { flex: 0 0 12px; height: 20px; display: flex; align-items: center; justify-content: center; }
.title { flex: 1; display: flex; justify-content: center; gap: 11px; font-size: 11px; line-height: 22px; white-space: nowrap; }
.info { flex: 0 0 418px; }
.arrow { width: 12px; display: flex; justify-content: center; }
.search { width: 168px; height: 21px; padding: 0 2px; background: #fff; border: 1px solid #444; font-style: italic; }
input::placeholder { color: #6d6f6e; opacity: 1; }
.info .ib { flex: 0 0 24px; }
.signin { flex: 1; display: flex; align-items: center; gap: 4px; padding: 0 4px 0 3px; }
.signin .dd { margin-left: auto; }
.rule { width: 1px; height: 18px; margin: 0 3px; background: #bbb; }
.info .help { flex: 0 0 16px; height: 16px; border: 1px solid #555; border-radius: 8px; font-weight: bold; color: #2b50a0; margin: 0 2px; }
.winctl { flex: 0 0 149px; display: flex; padding-left: 24px; }
.winctl button { flex: 1; display: flex; align-items: center; justify-content: center; }
.menu { grid-area: 2 / 1 / 3 / 3; display: flex; padding-left: 52px; gap: 21px; align-items: center; color: #f1f1f1; background: linear-gradient(#949594, #5f605f); }
.docctl { margin-left: auto; display: flex; }

/* drawing tabs */
.tabs { flex: none; height: 25px; display: flex; align-items: flex-start; padding: 3px 0 0 20px; background: #afb0ae; border-bottom: 2px solid #f2f5f3; position: relative; }
.tab { position: relative; z-index: 0; height: 21px; display: flex; align-items: center; justify-content: space-between; padding: 0 11px 0 10px; color: #5f6160; white-space: nowrap; --face: #d9dbd8; }
.tab::before, .tab::after, .ltab::before, .ltab::after { content: ""; position: absolute; z-index: -1; top: 0; bottom: 0; background: var(--face); }
.tab::before { left: 0; right: 40%; border-radius: 9px 0 0 0; transform: skewX(-20deg); }
.tab::after { right: 0; left: 40%; border-radius: 0 9px 0 0; transform: skewX(20deg); }
.tab .cx { stroke: #8c8e8c; }
.t-start { width: 116px; }
.t-thiet { width: 177px; }
.t-boc { width: 115px; }
.t-plan { width: 117px; }
.t-back { width: 115px; }
.hover { --face: #eceeeb; color: #222; }
.active { --face: #fbfdfb; color: #111; }
.plus { height: 14px; width: 20px; margin: 4px 0 0 7px; display: flex; align-items: center; justify-content: center; background: #e8eae8; border-radius: 2px 8px 2px 8px; }
.pointer { position: absolute; z-index: 2; left: 185px; top: -4px; width: 44px; height: 44px; border-radius: 22px; background: #fff700; mix-blend-mode: multiply; }
.cursor { position: absolute; z-index: 3; left: 206px; top: 18px; width: 13px; height: 19px; fill: #fff; stroke: #222; }

/* toolbars */
.bars { flex: none; display: grid; gap: 3px; padding: 1px 0 4px; background: #f1f4f2; }
.bar { display: flex; justify-content: space-between; height: 23px; }
.palette { display: flex; align-items: center; background: #e8ebe9; border: 1px solid #898c8b; border-width: 1px 1px 1px 0; }
.grip { flex: 0 0 9px; align-self: stretch; background: repeating-linear-gradient(90deg, #a1a3a6 0 2px, #76797e 2px 3px); border: solid #b9bbbd; border-width: 2px; }
.grip.flat { flex: 0 0 8px; background: repeating-linear-gradient(#a1a3a6 0 1px, #85888d 1px 2px); border-width: 2px 4px; border-color: #a2a3a6; }
.sep { flex: 0 0 2px; height: 18px; margin: 0 2px; background: #a2a5a4; }
.sep.dark { flex: 0 0 1px; background: #222; }
.p-view { flex: 0 0 215px; }
.p-view > .ib { flex: 0 0 21px; }
.p-std { flex: 0 0 607px; }
.p-style { flex: 0 0 451px; }
.p-layer { flex: 0 0 376px; }
.p-prop { flex: 0 0 545px; }
.p-dim { flex: 0 0 352px; }
.p-style > .ib { flex: 0 0 21px; }
.p-layer > .ib { flex: 0 0 22px; }
.combo { flex: 1 1 0; height: 20px; min-width: 0; display: flex; align-items: center; background: #dfe2df; border: 1px solid #c3c6c4; }
.combo select { flex: 1; min-width: 0; align-self: stretch; padding-left: 6px; appearance: none; outline: 0; opacity: 1; background: url("data:image/svg+xml,%3Csvg xmlns='http://www.w3.org/2000/svg' width='8' height='6'%3E%3Cpath d='M1 1l3 3 3-3' fill='none' stroke='%23444'/%3E%3C/svg%3E") no-repeat right 2px center; }
.combo select.inset { padding-left: 15px; }
.combo select.near { padding-left: 2px; }
.blank { flex: 1 0 91px; background: #f2f4f1; border-color: #fff; }
.layer { flex: 1; gap: 1px; padding-left: 2px; background: #dde3e4; border-color: #a4b5bf; }
.combo.layer select { padding-left: 2px; }
.swatch { width: 10px; height: 10px; margin-left: 2px; background: #fff; border: 1px solid #222; }
.c-color { flex: 136 1 0; }
.c-ltype { flex: 148 1 0; }
.c-weight { flex: 116 1 0; }
.sample { height: 1px; background: #111; margin-left: 4px; }
.c-ltype .sample { width: 56px; }
.c-weight .sample { width: 32px; }
.off { flex: 112 1 0; background: #c8cac7; color: #7d807e; }
.combo.off select { padding-left: 10px; }
.helpbox { font-weight: bold; color: #263c60; }
.p-std > .helpbox { flex: 0 0 14px; height: 14px; margin: 0 4px; background: #fff; border: 1px solid #444; }

/* work area */
.work { flex: 1; min-height: 0; display: flex; background: #edf0ee; }
.side { flex: none; display: flex; flex-direction: column; background: #e8ebe9; }
.left { width: 24px; height: 421px; margin-right: 3px; border: 1px solid #8a8c8b; }
.vb { flex: 1 1 0; min-height: 0; display: flex; align-items: center; justify-content: center; width: 100%; }
.letter { font: 18px/20px "Open Sans", sans-serif; }
.canvas { flex: 1; min-width: 0; position: relative; overflow: hidden; background: #000; color: #fff; font-family: "Liberation Sans", Arial, sans-serif; white-space: nowrap; }
.beam { position: absolute; left: 68px; top: 0; width: 180px; height: 92px; fill: none; stroke: #1414d8; }
.stem { stroke: #0000a0; stroke-width: 2; }
.faint { stroke: #0a0a90; }
.head { display: grid; padding: 112px 0 0 18px; justify-content: start; color: #ffff1e; font-size: 49px; line-height: 66px; }
.head span:first-child { padding-left: 78px; }
.contact { width: 992px; margin: 15px 0 0 82px; padding-top: 15px; border-top: 1px solid #b5b5b5; text-align: right; font-size: 23px; line-height: 28px; font-kerning: none; }
.contact p:first-child { margin-bottom: 4px; }
.ucs { position: absolute; left: 9px; bottom: 7px; width: 70px; height: 72px; fill: none; stroke: #d7d7d7; }
.right { width: 21px; margin-left: 4px; border-left: 1px solid #8a8c8b; }
.stack { display: flex; flex-direction: column; }
.modify { flex: 0 0 380px; border-bottom: 1px solid #8a8c8b; }
.order { flex: 1; }
.order .vb { flex: 0 0 21px; }
.hr { height: 1px; margin: 3px 0 2px; background: #999; }
.order .abc { font: bold 8px/10px "Liberation Mono", monospace; flex-direction: column; align-items: flex-end; padding-right: 3px; gap: 2px; background: #d2d5d4; }

/* command line */
.command { flex: none; display: flex; height: 52px; padding-top: 3px; background: #e1e3e1; border-bottom: 1px solid #7c7e7d; font-family: "DejaVu Sans Mono", monospace; }
.cmdgrip { flex: 0 0 21px; display: flex; flex-direction: column; align-items: center; justify-content: space-between; background: linear-gradient(#888b89, #4f5150); padding-top: 4px; }
.dots { width: 16px; height: 5px; background: repeating-linear-gradient(90deg, #bbb 0 1px, #777 1px 3px); }
.cmdmain { flex: 1; display: flex; flex-direction: column; }
.history { flex: 1; padding: 10px 0 0 2px; background: #c5c7c4; border: solid #848685; border-width: 1px 0; }
.entry { height: 20px; display: flex; align-items: center; gap: 3px; padding-left: 5px; background: #fdfffd; }
.entry input { flex: 1; height: 20px; padding-left: 3px; font-style: italic; outline: 0; }
.entry input::placeholder { color: #8b8d8b; }
.prompt { width: 14px; height: 13px; border: 1px solid #8f98a5; background: #dce2eb; font-size: 8px; line-height: 10px; }

/* layout tabs */
.layouts { flex: none; height: 19px; display: flex; align-items: flex-start; gap: 1px; padding-left: 12px; background: #b0b2af; }
.ltab { position: relative; z-index: 0; width: 60px; height: 17px; line-height: 16px; color: #666967; --face: #dcdedb; }
.ltab:first-child { width: 52px; }
.ltab::before { left: 0; right: 40%; border-radius: 0 0 0 8px; transform: skewX(20deg); }
.ltab::after { right: 0; left: 40%; border-radius: 0 0 8px 0; transform: skewX(-20deg); }
.ltab.active { font-weight: bold; color: #111; --face: #fcfefc; }
.plus.low { margin: 1px 0 0 4px; }

/* status bar */
.status { flex: none; display: flex; align-items: center; height: 25px; margin-left: 82px; padding-left: 25px; background: #e4e6e4; white-space: nowrap; }
.coords { flex: 0 0 174px; }
.model { flex: 0 0 48px; border-left: 1px solid #f4f5f4; text-align: center; }
.sb { flex: 0 1 24px; min-width: 0; height: 24px; display: flex; align-items: center; justify-content: center; }
.narrow { flex-basis: 23px; }
.sd { flex: 0 0 14px; height: 24px; display: flex; align-items: center; justify-content: center; }
.scale { flex: 0 0 56px; }
.units { flex: 0 0 52px; }
.taskline { flex: none; height: 2px; background: #1b2f5f; }
```
